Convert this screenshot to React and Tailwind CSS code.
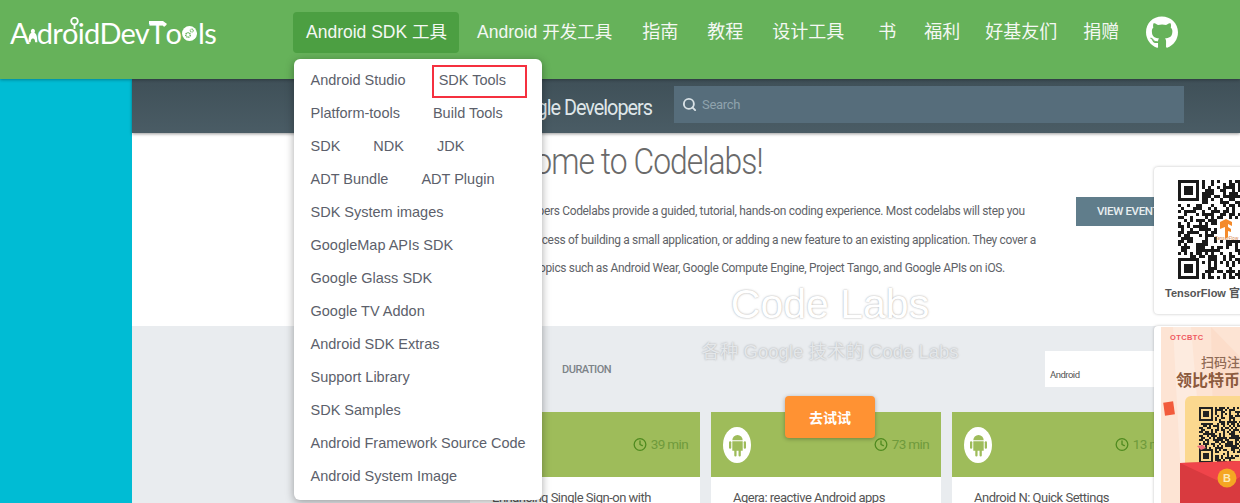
import React from "react";
import { FaGithub } from "react-icons/fa";
import { Clock, Search } from "lucide-react";

const nav = [
  ["指南", "ml-[4px]"],
  ["教程", "ml-[3px]"],
  ["设计工具", "ml-[3px]"],
  ["书", "ml-[8px]"],
  ["福利", "ml-[2px]"],
  ["好基友们", "ml-[-1px]"],
  ["捐赠", "ml-0"],
];

const rows = [
  ["Android Studio", "SDK Tools"],
  ["Platform-tools", "Build Tools"],
  ["SDK", "NDK", "JDK"],
  ["ADT Bundle", "ADT Plugin"],
  ["SDK System images"],
  ["GoogleMap APIs SDK"],
  ["Google Glass SDK"],
  ["Google TV Addon"],
  ["Android SDK Extras"],
  ["Support Library"],
  ["SDK Samples"],
  ["Android Framework Source Code"],
  ["Android System Image"],
];

function qrCells(n, seed, skip) {
  const out = [];
  let s = seed;
  const finder = (x, y, ox, oy) => {
    const dx = x - ox;
    const dy = y - oy;
    if (dx < 0 || dy < 0 || dx > 7 || dy > 7) return null;
    if (dx === 7 || dy === 7) return false;
    if (dx === 0 || dy === 0 || dx === 6 || dy === 6) return true;
    if (dx === 1 || dy === 1 || dx === 5 || dy === 5) return false;
    return true;
  };
  for (let y = 0; y < n; y++) {
    for (let x = 0; x < n; x++) {
      s = (s * 1103515245 + 12345) & 0x7fffffff;
      let v = ((s >> 16) & 3) > 1;
      const a = finder(x, y, 0, 0);
      const b = finder(x, y, 0, n - 7);
      const c = finder(x, y, n - 7, 0);
      if (a !== null) v = a;
      else if (b !== null) v = b;
      else if (c !== null) v = c;
      if (skip && skip(x, y)) v = false;
      if (v) out.push([x, y]);
    }
  }
  return out;
}

function Logo() {
  return (
    <div className="relative ml-[10px] flex h-[30px] w-[206px] items-baseline font-['Lato'] text-[29px] leading-[30px] font-normal tracking-[-0.75px] text-white">
      <span>A</span>
      <svg viewBox="0 0 16 20" className="mx-[-2px] h-[19px] w-[15px] self-end mb-[3px]" aria-hidden="true">
        <path d="M8 1a3 3 0 0 1 2 5c3 2 4 6 4 13h-3c0-3-1-5-3-5s-3 2-3 5H2C2 12 3 8 6 6a3 3 0 0 1 2-5z" fill="#fff" />
      </svg>
      <span>dr</span>
      <span className="relative">
        o
        <svg viewBox="0 0 12 14" className="absolute top-[-2px] left-[7px] h-[14px] w-[11px]" aria-hidden="true">
          <circle cx="6" cy="5" r="3.6" fill="none" stroke="#fff" strokeWidth="2" />
          <path d="M6 8.5v5" stroke="#fff" strokeWidth="2" />
        </svg>
      </span>
      <span>id</span>
      <span>Dev</span>
      <span className="relative">
        T
        <svg viewBox="0 0 20 8" className="absolute top-[2px] left-[-1px] h-[8px] w-[20px]" aria-hidden="true">
          <path d="M1 1h14l4 3-3 3-2-3H1z" fill="#fff" />
        </svg>
      </span>
      <span>o</span>
      <svg viewBox="0 0 20 20" className="mx-px h-[19px] w-[19px] self-end mb-[5px]" aria-hidden="true">
        <circle cx="10" cy="10" r="10" fill="#fff" />
        <circle cx="8" cy="12" r="3" fill="none" stroke="#66b25a" strokeWidth="2" strokeDasharray="1.6 0.8" />
        <circle cx="13" cy="6" r="2" fill="none" stroke="#66b25a" strokeWidth="1.5" strokeDasharray="1.2 0.6" />
      </svg>
      <span>ls</span>
    </div>
  );
}

function Header() {
  return (
    <header className="relative z-10 flex h-[79px] items-start bg-[#66b25a] shadow-[0_1px_3px_rgba(0,0,0,0.3)]">
      <div className="mt-[18px]">
        <Logo />
      </div>
      <nav className="ml-[77px] mt-[12px] flex h-[41px] items-center font-['Liberation_Sans','Noto_Sans_CJK_SC',sans-serif] text-[18px] text-[#f4f8f3]">
        <a className="flex h-[41px] items-center rounded-[4px] bg-[#4c9f42] pr-[12px] pl-[13px] text-[17.5px]">Android SDK 工具</a>
        <a className="ml-[5px] px-[13px] text-[17.5px]">Android 开发工具</a>
        {nav.map(([t, m]) => (
          <a key={t} className={`px-[13px] ${m}`}>
            {t}
          </a>
        ))}
        <FaGithub className="ml-[14px] h-[33px] w-[32px] text-white" />
      </nav>
    </header>
  );
}

function Menu() {
  return (
    <div className="absolute top-[59px] left-[294px] z-20 w-[248px] rounded-[6px] bg-white pt-[5px] pb-[7px] font-['Liberation_Sans',sans-serif] text-[14.5px] text-[#5c5f6b] shadow-[0_2px_8px_rgba(0,0,0,0.35)]">
      {rows.map((r) => (
        <div key={r[0]} className="flex h-[33px] items-center whitespace-nowrap">
          {r.map((t) => (
            <a key={t} className="relative px-[16.5px]">
              {t}
              {t === "SDK Tools" && (
                <span className="absolute top-[-4.5px] left-[10px] h-[33px] w-[95px] border-[2.5px] border-[#f5303f]" />
              )}
            </a>
          ))}
        </div>
      ))}
    </div>
  );
}

function TopBar() {
  return (
    <div className="relative z-[1] flex h-[54px] shrink-0 items-center bg-gradient-to-b from-[#3f5058] to-[#4a5c65] pb-[3px] font-['Roboto',sans-serif] shadow-[0_1px_3px_rgba(0,0,0,0.4)]">
      <div className="ml-[320px] w-[200px] shrink-0 origin-right scale-x-[0.9] whitespace-nowrap pt-[5px] text-right text-[22px] tracking-[-1.1px] text-[#dfe6e9]">Google Developers</div>
      <div className="ml-[22px] flex h-[37px] w-[510px] items-center bg-[#566d7b] pl-[8px] text-[13px] text-[#8fa3ad]">
        <Search className="h-[15px] w-[15px] text-[#d9e2e6]" strokeWidth={3} />
        <span className="ml-[5px] tracking-[-0.3px]">Search</span>
      </div>
    </div>
  );
}

function Hero() {
  return (
    <section className="flex h-[193px] shrink-0 bg-white pl-[333px] font-['Roboto',sans-serif] text-[#5f6368]">
      <div className="w-[611px] shrink-0">
        <h1 className="mt-[9px] ml-[5px] origin-left scale-x-[0.86] whitespace-nowrap text-[37px] leading-[40px] font-light tracking-[-1.1px] text-[#6a6a6a]">Welcome to Codelabs!</h1>
        <div className="mt-[14px] origin-left scale-x-[0.885] whitespace-nowrap text-[13.5px] leading-[28.7px] tracking-[-0.35px]">
          <p>Google Developers Codelabs provide a guided, tutorial, hands-on coding experience. Most codelabs will step you</p>
          <p>through the process of building a small application, or adding a new feature to an existing application. They cover a</p>
          <p>wide range of topics such as Android Wear, Google Compute Engine, Project Tango, and Google APIs on iOS.</p>
        </div>
      </div>
      <a className="mt-[64px] flex h-[29px] w-[100px] shrink-0 items-center bg-[#607d8b] pl-[21px] text-[11.5px] font-medium tracking-[-0.35px] whitespace-nowrap text-[#e8eef0]">VIEW EVENTS</a>
    </section>
  );
}

function AndroidGlyph() {
  return (
    <svg viewBox="0 0 18 26" className="h-[26px] w-[17px]" aria-hidden="true">
      <path d="M3.5 8a5.5 5.5 0 0 1 11 0z" fill="#9ebc5a" />
      <path d="M3.5 9h11v10h-2v5a1 1 0 0 1-2.4 0v-5H8v5a1 1 0 0 1-2.4 0v-5H3.5z" fill="#9ebc5a" />
      <rect x="0" y="9" width="2.4" height="8" rx="1.2" fill="#9ebc5a" />
      <rect x="15.6" y="9" width="2.4" height="8" rx="1.2" fill="#9ebc5a" />
    </svg>
  );
}

function Card({ title, mins, icon }) {
  return (
    <article className="w-[230px] shrink-0 bg-white">
      <div className="flex h-[65px] items-center justify-between bg-[#9ebc5a] pr-[12px] pl-[12px]">
        {icon ? (
          <span className="flex h-[36px] w-[28px] items-center justify-center rounded-[50%] bg-white">
            <AndroidGlyph />
          </span>
        ) : (
          <span />
        )}
        <span className="flex items-center gap-[4px] text-[13.5px] tracking-[-0.65px] text-[#6f9a3c]">
          <Clock className="h-[19px] w-[14px] text-[#4f8a1f]" strokeWidth={2.2} />
          {mins} min
        </span>
      </div>
      <div className="px-[22px] pt-[13px] text-[13px] leading-[16px] tracking-[-0.5px] whitespace-nowrap text-[#555]">{title}</div>
    </article>
  );
}

function Lower() {
  return (
    <section className="relative flex-1 overflow-hidden bg-[#e9ecef] font-['Roboto',sans-serif]">
      <div className="flex h-[86px] items-start pl-[370px] text-[11px] font-medium tracking-[-0.5px] text-[#7c8388]">
        <span className="mt-[36px] w-[60px] shrink-0">RECENT</span>
        <span className="mt-[36px] w-[50px] shrink-0">DURATION</span>
        <div className="mt-[25px] ml-[433px] h-[36px] w-[180px] shrink-0 bg-white pt-[17px] pl-[5px] text-[9.5px] leading-[14px] font-normal text-[#555]">Android</div>
      </div>
      <div className="flex gap-[11px] pl-[338px]">
        <Card title="Enhancing Single Sign-on with" mins="39" />
        <Card title="Agera: reactive Android apps" mins="73" icon />
        <Card title="Android N: Quick Settings" mins="13" icon />
      </div>
    </section>
  );
}

function TensorQR() {
  const cells = qrCells(33, 77, (x, y) => x > 12 && x < 26 && y > 12 && y < 20);
  return (
    <svg viewBox="0 0 99 99" className="h-[99px] w-[99px] shrink-0" aria-hidden="true">
      {cells.map(([x, y]) => (
        <rect key={`${x}-${y}`} x={x * 3} y={y * 3} width="3" height="3" fill="#1a1a1a" />
      ))}
      <path d="M42 42l6-3 6 3v4l-4-2v3l3 2v3l-3-1v6l-3 2V47l-5 2z" fill="#f48a2a" />
      <text x="37" y="60" fontSize="4.5" fill="#d98a50" fontFamily="Roboto">TensorFlow</text>
    </svg>
  );
}

function Poster() {
  const cells = qrCells(28, 19);
  return (
    <svg viewBox="0 0 79 190" className="h-[190px] w-[79px]" aria-hidden="true">
      <rect width="79" height="190" fill="#fde4d4" />
      <path d="M12 0l10 190h24L30 0z" fill="#fdebdf" />
      <path d="M50 0l4 190h25V30z" fill="#fcddca" />
      <text x="9" y="13" fontSize="7.5" fontWeight="700" letterSpacing="0.4" fill="#ef5a5f" fontFamily="Liberation Sans">OTCBTC</text>
      <text x="40" y="40" fontSize="13" fontWeight="500" fill="#8f6a55" fontFamily="Noto Sans CJK SC">扫码注册</text>
      <text x="15" y="59" fontSize="16" fontWeight="700" fill="#8c5a3d" fontFamily="Noto Sans CJK SC">领比特币</text>
      <rect x="3" y="75" width="10" height="13" fill="#f25b3c" transform="rotate(-8 8 81)" />
      <rect x="24" y="69" width="70" height="90" rx="6" fill="#fbd88f" />
      <g transform="translate(38 80) scale(2)">
        {cells.map(([x, y]) => (
          <rect key={`${x}-${y}`} x={x} y={y} width="1" height="1" fill="#222" />
        ))}
      </g>
      <path d="M19 136l60-2v56H19z" fill="#d93a3f" />
      <path d="M19 136l47 22 13-8v-16z" fill="#f0444a" />
      <circle cx="66" cy="151" r="9.5" fill="#f5a623" />
      <text x="62" y="155" fontSize="11" fontWeight="700" fill="#fde9b8" fontFamily="Liberation Sans">B</text>
      <path d="M36 119l6-1 3 3-5 2z" fill="#ee6a7a" />
    </svg>
  );
}

function SidePanels() {
  return (
    <aside className="absolute top-[167px] left-[1154px] z-20 flex w-[120px] flex-col gap-[12px] font-['Liberation_Sans','Noto_Sans_CJK_SC',sans-serif]">
      <div className="flex h-[147px] flex-col rounded-[4px] bg-white pt-[13px] pl-[11px] shadow-[0_0_3px_rgba(0,0,0,0.25)]">
        <div className="pl-[13px]">
          <TensorQR />
        </div>
        <div className="mt-[6px] whitespace-nowrap text-[11px] font-bold text-[#555]">TensorFlow 官方镜像</div>
      </div>
      <div className="h-[190px] rounded-[4px] bg-white pt-px pl-[7px] shadow-[0_0_3px_rgba(0,0,0,0.25)]">
        <Poster />
      </div>
    </aside>
  );
}

export default function App() {
  return (
    <div className="relative h-[503px] w-[1240px] overflow-hidden bg-white">
      <Header />
      <Menu />
      <div className="flex h-[424px]">
        <div className="w-[132px] shrink-0 bg-[#00bcd4]" />
        <main className="relative flex min-w-0 flex-1 flex-col">
          <TopBar />
          <Hero />
          <Lower />
        </main>
      </div>
      <SidePanels />
      <div className="absolute top-[282px] left-[630px] z-10 w-[400px] text-center font-['Liberation_Sans',sans-serif] text-[41px] leading-[44px] font-light text-white [text-shadow:0_0_2px_rgba(120,120,120,0.7)]">Code Labs</div>
      <div className="absolute top-[340px] left-[630px] z-10 w-[400px] text-center font-['Liberation_Sans','Noto_Sans_CJK_SC',sans-serif] text-[18.5px] leading-[24px] text-[#e4e7ea] [text-shadow:0_0_2px_rgba(120,120,120,0.6)]">各种 Google 技术的 Code Labs</div>
      <a className="absolute top-[396px] left-[785px] z-10 flex h-[42px] w-[90px] items-center justify-center rounded-[4px] bg-[#ff9233] font-['Noto_Sans_CJK_SC',sans-serif] text-[14px] font-bold text-white shadow-[0_1px_4px_rgba(0,0,0,0.3)]">去试试</a>
    </div>
  );
}
